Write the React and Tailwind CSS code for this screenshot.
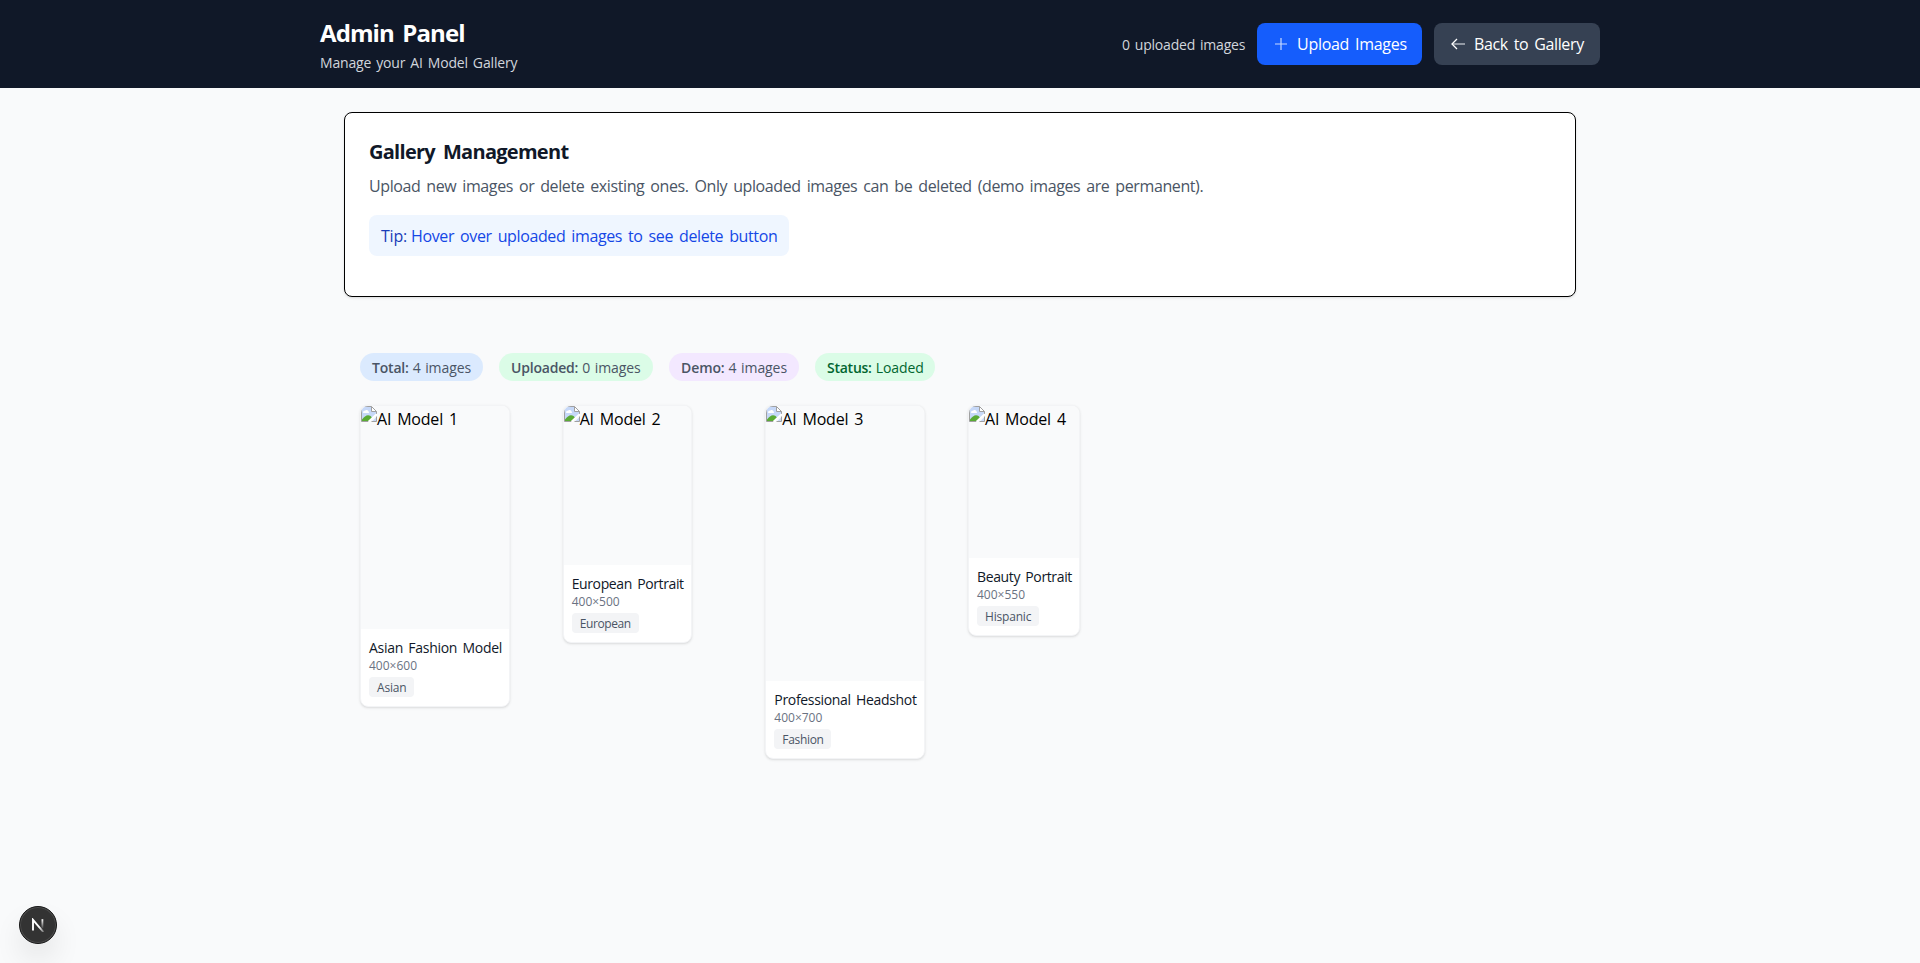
const badges = [
  { label: "Total:", value: "4 images", box: "w-[123px] bg-blue-100 text-gray-600", bold: "tracking-[-0.2px]" },
  { label: "Uploaded:", value: "0 images", box: "w-[154px] bg-green-100 text-gray-600", bold: "tracking-[-0.2px]" },
  { label: "Demo:", value: "4 images", box: "w-[130px] bg-purple-100 text-gray-600", bold: "tracking-[-0.1px]" },
  { label: "Status:", value: "Loaded", box: "w-[120px] bg-green-100 text-green-800", bold: "tracking-[-0.25px]" },
];

const cards = [
  { alt: "AI Model 1", name: "Asian Fashion Model", size: "400×600", tag: "Asian", card: "w-[150px]", image: "h-[223px]", nameCls: "tracking-[-0.29px]", tagCls: "w-[45px] tracking-[-0.2px]" },
  { alt: "AI Model 2", name: "European Portrait", size: "400×500", tag: "European", card: "w-[129px]", image: "h-[159px]", nameCls: "tracking-[-0.38px]", tagCls: "w-[67px] tracking-[-0.4px]" },
  { alt: "AI Model 3", name: "Professional Headshot", size: "400×700", tag: "Fashion", card: "w-[160px]", image: "h-[275px]", nameCls: "tracking-[-0.33px]", tagCls: "w-[57px] tracking-[-0.33px]" },
  { alt: "AI Model 4", name: "Beauty Portrait", size: "400×550", tag: "Hispanic", card: "w-[112px]", image: "h-[152px]", nameCls: "tracking-[-0.37px]", tagCls: "w-[62px] tracking-[-0.18px]" },
];

function BrokenImageIcon() {
  return (
    <svg width="16" height="16" viewBox="0 0 16 16" className="shrink-0">
      <path d="M0.5 0.5H10.5L15.5 5.5V8L7.5 15.5H0.5Z" fill="#c6d8f8" />
      <path d="M2 6.5C2 5 3.5 4.6 4 5C4.5 3.4 7 3.6 7.1 5.2C8.3 5.2 8.4 6.7 7.4 7H2.6C2.2 7 2 6.8 2 6.5Z" fill="#fff" />
      <path d="M1 15V13.5C3 11 5 9.2 7 9.2C9 9.2 10.4 10.4 11.2 12L7.8 15Z" fill="#5aab35" />
      <path d="M10.5 0.5V5.5H15.5Z" fill="#fff" />
      <path d="M7.5 15.5H0.5V0.5H10.5L15.5 5.5V8M10.5 0.5V5.5H15.5" fill="none" stroke="#a0a0a0" />
      <path d="M15.5 8L7.5 15.5" stroke="#fff" strokeWidth="1.6" />
      <path d="M15.5 11V15.5H11Z" fill="#c6d8f8" />
      <path d="M15.5 10.5V15.5H10.5" fill="none" stroke="#a0a0a0" />
    </svg>
  );
}

function GalleryCard({ item }) {
  return (
    <div className="w-[202.67px]">
      <div className={`overflow-hidden rounded-lg border border-gray-100 bg-white shadow-sm ${item.card}`}>
        <div className={`flex items-start bg-gray-50 ${item.image}`}>
          <BrokenImageIcon />
          <span className="whitespace-nowrap text-base leading-[26px] tracking-[-0.2px] text-black [word-spacing:2px]">{item.alt}</span>
        </div>
        <div className="px-2 py-[9px]">
          <h3 className={`whitespace-nowrap text-sm text-gray-900 [word-spacing:2px] ${item.nameCls}`}>{item.name}</h3>
          <p className="text-xs text-gray-500">{item.size}</p>
          <div className={`mt-[3px] h-5 whitespace-nowrap rounded bg-gray-100 px-2 text-xs leading-[21px] text-gray-600 ${item.tagCls}`}>{item.tag}</div>
        </div>
      </div>
    </div>
  );
}

export default function App() {
  return (
    <div className="relative min-h-screen bg-gray-50 font-['Open_Sans','Noto_Sans',sans-serif]">
      <header className="h-[88px] bg-gray-900 text-white">
        <div className="mx-auto flex max-w-7xl items-center justify-between py-4">
          <div className="-mb-px pt-px">
            <h1 className="text-2xl leading-8 font-bold tracking-[-0.9px] [word-spacing:3px]">Admin Panel</h1>
            <p className="mt-1 text-sm leading-5 tracking-[-0.16px] text-gray-300 [word-spacing:1.5px]">Manage your AI Model Gallery</p>
          </div>
          <div className="flex items-center gap-3">
            <span className="w-[123px] whitespace-nowrap pt-0.5 text-sm tracking-[-0.2px] text-gray-300 [word-spacing:1.5px]">0 uploaded images</span>
            <button className="flex h-[42px] w-[165px] items-center whitespace-nowrap rounded-lg bg-[#155dfc] pl-[18px]">
              <svg width="12" height="12" viewBox="0 0 12 12" className="mr-[10px] shrink-0" stroke="#c9dafe" strokeWidth="1.2">
                <path d="M6 0V12M0 6H12" />
              </svg>
              <span className="tracking-[-0.28px] [word-spacing:2px]">Upload Images</span>
            </button>
            <button className="flex h-[42px] w-[166px] items-center whitespace-nowrap rounded-lg bg-gray-700 pl-[17px]">
              <svg width="14" height="12" viewBox="0 0 14 12" className="mr-[9px] shrink-0" fill="none" strokeWidth="1.3">
                <path d="M1 6H14" stroke="#c5cad1" />
                <path d="M6 1L1 6L6 11" stroke="#fff" />
              </svg>
              <span className="tracking-[-0.35px] [word-spacing:2px]">Back to Gallery</span>
            </button>
          </div>
        </div>
      </header>

      <main className="mx-auto max-w-7xl px-6 pt-6">
        <section className="h-[185px] rounded-lg border border-black bg-white p-6 shadow-sm">
          <h2 className="pt-px text-xl leading-7 font-bold tracking-[-0.72px] text-gray-900 [word-spacing:3.5px]">Gallery Management</h2>
          <p className="mt-2 text-base leading-6 tracking-[-0.4px] whitespace-nowrap text-gray-600 [word-spacing:2.2px]">
            Upload new images or delete existing ones. Only uploaded images can be deleted (demo images are permanent).
          </p>
          <div className="mt-[17px] flex h-[41px] w-[420px] items-center gap-1 rounded-lg bg-blue-50 px-3 whitespace-nowrap text-blue-700">
            <span className="tracking-[-0.2px] text-blue-800">Tip:</span>
            <span className="tracking-[-0.38px] [word-spacing:2.2px]">Hover over uploaded images to see delete button</span>
          </div>
        </section>

        <section className="px-4 pt-14">
          <div className="flex gap-4">
            {badges.map((b) => (
              <div key={b.label} className={`flex h-7 items-center gap-1 rounded-full px-3 pt-0.5 text-sm whitespace-nowrap ${b.box}`}>
                <strong className={`font-semibold ${b.bold}`}>{b.label}</strong>
                <span className="tracking-[-0.08px] [word-spacing:1px]">{b.value}</span>
              </div>
            ))}
          </div>
          <div className="mt-6 flex items-start">
            {cards.map((c) => (
              <GalleryCard key={c.alt} item={c} />
            ))}
          </div>
        </section>
      </main>

      <div className="fixed bottom-[19px] left-[19px] flex size-[38px] items-center justify-center rounded-full border border-[#171717] bg-[#333] shadow-[inset_0_0_0_1px_#4d4d4d,0_16px_32px_-8px_rgba(0,0,0,0.24)]">
        <svg width="14" height="14" viewBox="0 0 14 14" fill="none">
          <defs>
            <linearGradient id="stem" x1="0" y1="0" x2="0" y2="1">
              <stop offset="0" stopColor="#fff" />
              <stop offset="1" stopColor="#fff" stopOpacity="0.1" />
            </linearGradient>
            <linearGradient id="slash" x1="0" y1="0" x2="1" y2="1">
              <stop offset="0.6" stopColor="#fff" />
              <stop offset="1" stopColor="#fff" stopOpacity="0.3" />
            </linearGradient>
          </defs>
          <path d="M2 12.5V1.8L12.4 14" stroke="url(#slash)" strokeWidth="1.9" />
          <rect x="10.5" y="1.2" width="1.8" height="9" fill="url(#stem)" />
        </svg>
      </div>
    </div>
  );
}
